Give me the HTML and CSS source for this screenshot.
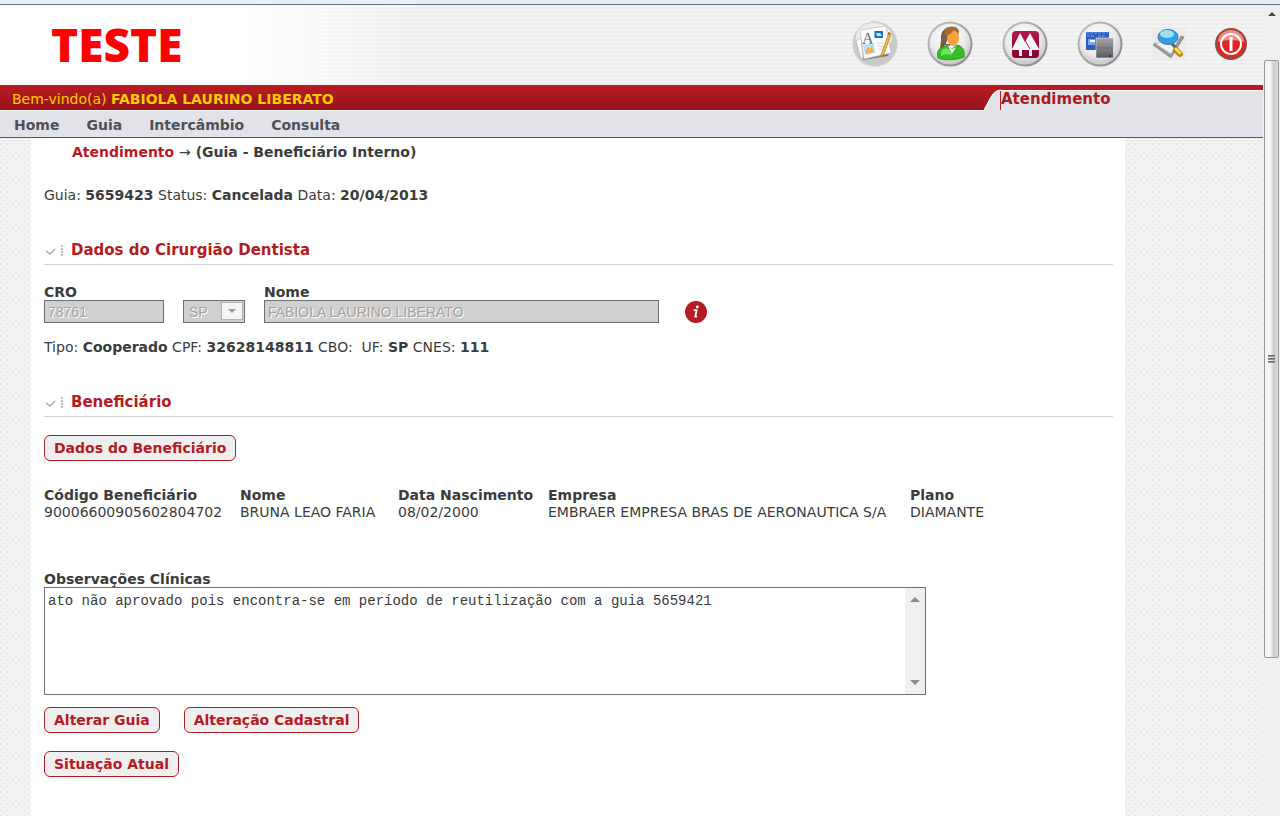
FILE: index.html
```html
<!DOCTYPE html>
<html lang="pt-BR">
<head>
<meta charset="utf-8">
<title>Atendimento - Guia</title>
<link rel="stylesheet" href="styles.css">
</head>
<body>
<div class="window-edge"></div>
<div class="viewport">
  <div class="page">
    <header class="header">
      <div class="logo">TESTE</div>
      <nav class="tools" aria-label="Ferramentas">
        <a href="#" aria-label="Documentos"><svg width="46" height="46" viewBox="0 0 46 46">
          <defs>
            <radialGradient id="disc" cx="45%" cy="35%" r="65%"><stop offset="0" stop-color="#fff"/><stop offset=".6" stop-color="#ececec"/><stop offset="1" stop-color="#c4c4c4"/></radialGradient>
            <linearGradient id="ring" x1="0" y1="0" x2="1" y2="1"><stop offset="0" stop-color="#c2c2c2"/><stop offset="1" stop-color="#858585"/></linearGradient>
            <linearGradient id="gray" x1="0" y1="0" x2="0" y2="1"><stop offset="0" stop-color="#a2a5aa"/><stop offset="1" stop-color="#575b62"/></linearGradient>
            <linearGradient id="rose" x1="0" y1="0" x2="0" y2="1"><stop offset="0" stop-color="#b5174f"/><stop offset="1" stop-color="#840033"/></linearGradient>
          </defs>
          <circle cx="23" cy="23" r="22.5" fill="#c9c9c9" stroke="#dedede"/>
          <ellipse cx="22" cy="16" rx="18" ry="14" fill="#ececec"/>
          <path d="M4 20l5-3 2 20-2 1z" fill="#fff" stroke="#a5a5a5" stroke-width=".6"/>
          <path d="M11 39l25-4 2-5-26 5z" fill="#777"/>
          <path d="M8 9l26-4 5 27-27 6z" fill="#fcfcfc" stroke="#bbb" stroke-width=".7"/>
          <text x="10" y="23" class="icon-letter" fill="#59646c">A</text>
          <rect x="22.500" y="10" width="8.500" height="7" fill="#1671ce"/><path d="M24 12h4l2 3h-5z" fill="#c8e6ff"/>
          <path d="M11 24l11-2 1 10-10 2z" fill="#b7dffa"/><path d="M13 31l3-5 2 2 2-3 2 6-8 2z" fill="#f2b14e"/>
          <path d="M25 22h7M25 25h7M26 28h5" stroke="#d4d4d4"/>
          <path d="M37 12l-7 19-2 5 4-3 7-20z" fill="#f4bd38" stroke="#ae7b18" stroke-width=".7"/><path d="M36 11l3 1-1 2-2-1z" fill="#c55f4b"/>
        </svg></a>
        <a href="#" aria-label="Atendente"><svg width="46" height="46" viewBox="0 0 46 46">
          <circle cx="23" cy="23" r="21.500" fill="url(#disc)" stroke="url(#ring)" stroke-width="2"/>
          <path d="M14 19C13 9 20 5 26 6c5 0 7 4 5 8L21 18l-4 8-4 2z" fill="#8b5427"/>
          <path d="M11 37c-2-7 2-12 9-12l5 3 5-4c6 1 8 6 7 12-7 3-19 4-26 1z" fill="#35bf27" stroke="#169117" stroke-width=".8"/>
          <path d="M14 31c3-5 7-4 9-1l2 4c-4-1-8-1-11 1z" fill="#75e45b"/>
          <path d="M21 25l4 8 4-7-4 2z" fill="#eefaff"/>
          <ellipse cx="26" cy="17" rx="6" ry="8" fill="#f7a33d"/>
          <path d="M18 15c4-1 7-3 9-6l5 3c0-6-5-7-9-6-5 1-7 5-5 9z" fill="#a86a30"/>
          <path d="M17 12v8c0 4 3 4 6 4" fill="none" stroke="#64615f" stroke-width="1.500"/><rect x="15" y="14" width="4" height="7" rx="2" fill="#676465"/>
        </svg></a>
        <a href="#" aria-label="Cooperativa"><svg width="46" height="46" viewBox="0 0 46 46">
          <circle cx="23" cy="23" r="21.500" fill="url(#disc)" stroke="url(#ring)" stroke-width="2"/>
          <rect x="10" y="10" width="27" height="27" rx="4" fill="url(#rose)"/>
          <path d="M10 28L18 12l5 9 5-9 9 16v1h-7v6h-3v-6h-7v6h-3v-6h-7z" fill="#f6f6f6"/>
          <path d="M21 16l7 12" stroke="#b5174f"/>
        </svg></a>
        <a href="#" aria-label="Sistema"><svg width="46" height="46" viewBox="0 0 46 46">
          <circle cx="23" cy="23" r="21.500" fill="url(#disc)" stroke="url(#ring)" stroke-width="2"/>
          <rect x="9" y="11" width="23" height="18" fill="#2c5bbe"/>
          <path d="M9 12h22M10 15h8M21 15h8" stroke="#7da7ee" stroke-dasharray="3 1"/>
          <rect x="11" y="18" width="7" height="6" fill="#79a6ed"/><path d="M13 19h5v2h-5z" fill="#fff"/>
          <rect x="19" y="17" width="17.500" height="20" fill="url(#gray)" stroke="#e9e9e9" stroke-width=".6"/>
          <path d="M20 27h15" stroke="#696d73"/><path d="M32 34h2v2h-2z" fill="#343a4c"/>
        </svg></a>
        <a href="#" aria-label="Pesquisar"><svg width="34" height="34" viewBox="0 0 34 34">
          <rect width="34" height="34" fill="#ebebeb"/>
          <path d="M1 18l18 13 13-21-3-1-10 17L3 16z" fill="#999" stroke="#777" stroke-width=".6"/>
          <path d="M4 17l7-4 13 5-5 9z" fill="#f5f5f5" stroke="#bbb"/>
          <ellipse cx="16" cy="10" rx="10" ry="7.500" fill="#2da1e2" stroke="#3f72a0"/>
          <ellipse cx="15" cy="7" rx="7" ry="4" fill="#a6ddf6"/>
          <path d="M20 17l4 4" stroke="#58616b" stroke-width="3"/>
          <path d="M24 23l4 4" stroke="#b58a13" stroke-width="6" stroke-linecap="round"/><path d="M24 22l4 4" stroke="#f7df57" stroke-width="3" stroke-linecap="round"/>
        </svg></a>
        <a href="#" aria-label="Sair"><svg width="32" height="32" viewBox="0 0 32 32">
          <circle cx="16" cy="16" r="15" fill="#e32322" stroke="#8e4c46" stroke-width="2"/>
          <path d="M3 14a13 12 0 0126 0q-13-4-26 0" fill="#f28a80"/>
          <circle cx="16" cy="16" r="10" fill="none" stroke="#fff" stroke-width="2"/>
          <path d="M16 9v14" stroke="#fff" stroke-width="3"/>
        </svg></a>
      </nav>
    </header>
    <div class="bar">
      <p class="welcome">Bem-vindo(a) <strong>FABIOLA LAURINO LIBERATO</strong></p>
      <svg class="bar-curve" width="17" height="26" viewBox="0 0 17 26" aria-hidden="true">
        <path d="M0 25L7 12Q11 5 17 5V26H0z" fill="#e1e3e9"/>
        <path d="M0 25L7 12Q11 5 17 5" fill="none" stroke="#fff"/>
        <path d="M16.500 6v19" stroke="#b51b22"/>
      </svg>
      <div class="tab">Atendimento</div>
    </div>
    <nav class="menu" aria-label="Principal">
      <a href="#">Home</a><a href="#">Guia</a><a href="#">Intercâmbio</a><a href="#">Consulta</a>
    </nav>
    <main class="panel">
      <p class="crumbs"><a href="#">Atendimento</a> <span class="arrow">→</span> (Guia - Beneficiário Interno)</p>
      <p class="guide">Guia: <strong>5659423</strong> Status: <strong>Cancelada</strong> Data: <strong>20/04/2013</strong></p>

      <h2 class="section"><svg width="20" height="14" viewBox="0 0 20 14" aria-hidden="true"><path d="M2 8l4 3 5-5" fill="none" stroke="#a7a9ac" stroke-width="1.500"/><path d="M18 2v12" stroke="#bbb" stroke-width="2" stroke-dasharray="2 1"/></svg>Dados do Cirurgião Dentista</h2>
      <div class="dentist">
        <div class="field cro"><label for="cro">CRO</label><input id="cro" value="78761" disabled></div>
        <div class="field state">
          <select aria-label="UF" disabled><option>SP</option></select>
          <svg class="drop" width="22" height="18" viewBox="0 0 22 18" aria-hidden="true"><rect x=".5" y=".5" width="21" height="17" fill="#f4f4f4" stroke="#b2b2b2"/><path d="M7 7h8l-4 4z" fill="#9b9b9b"/></svg>
        </div>
        <div class="field name"><label for="nome">Nome</label><input id="nome" value="FABIOLA LAURINO LIBERATO" disabled></div>
        <button class="info" aria-label="Informações"><svg width="22" height="22" viewBox="0 0 24 24"><circle cx="12" cy="12" r="12" fill="#b51b22"/><circle cx="13.500" cy="6.500" r="1.600" fill="#fff"/><path d="M9.500 10h3.200l-1.500 7h2" fill="none" stroke="#fff" stroke-width="2"/></svg></button>
      </div>
      <p class="details">Tipo: <strong>Cooperado</strong> CPF: <strong>32628148811</strong> CBO: &nbsp;UF: <strong>SP</strong> CNES: <strong>111</strong></p>

      <h2 class="section"><svg width="20" height="14" viewBox="0 0 20 14" aria-hidden="true"><path d="M2 8l4 3 5-5" fill="none" stroke="#a7a9ac" stroke-width="1.500"/><path d="M18 2v12" stroke="#bbb" stroke-width="2" stroke-dasharray="2 1"/></svg>Beneficiário</h2>
      <button class="btn beneficiary">Dados do Beneficiário</button>
      <table class="data">
        <colgroup><col class="c-code"><col class="c-name"><col class="c-date"><col class="c-company"><col></colgroup>
        <thead><tr><th>Código Beneficiário</th><th>Nome</th><th>Data Nascimento</th><th>Empresa</th><th>Plano</th></tr></thead>
        <tbody><tr><td>90006600905602804702</td><td>BRUNA LEAO FARIA</td><td>08/02/2000</td><td>EMBRAER EMPRESA BRAS DE AERONAUTICA S/A</td><td>DIAMANTE</td></tr></tbody>
      </table>

      <label class="notes-label" for="obs">Observações Clínicas</label>
      <div class="notes">
        <textarea id="obs">ato não aprovado pois encontra-se em período de reutilização com a guia 5659421</textarea>
        <div class="notes-scroll" aria-hidden="true">
          <svg width="10" height="6" viewBox="0 0 10 6"><path d="M0 6l5-5 5 5z" fill="#8c8c8c"/></svg>
          <svg width="10" height="6" viewBox="0 0 10 6"><path d="M0 0l5 5 5-5z" fill="#8c8c8c"/></svg>
        </div>
      </div>
      <div class="actions"><button class="btn">Alterar Guia</button><button class="btn">Alteração Cadastral</button></div>
      <button class="btn">Situação Atual</button>
    </main>
  </div>
  <div class="scrollbar" aria-hidden="true">
    <svg class="scroll-up" width="8" height="4" viewBox="0 0 8 4"><path d="M0 4l4-4 4 4z" fill="#444"/></svg>
    <div class="thumb"><i></i><i></i><i></i></div>
  </div>
</div>
</body>
</html>
```

FILE: styles.css
```css
* { box-sizing: border-box; }
body {
  margin: 0;
  min-height: 100vh;
  display: flex;
  flex-direction: column;
  color: #3b3b3b;
  font: 14px/18px Verdana, "DejaVu Sans", sans-serif;
}
p, h2 { margin: 0; }
a { color: inherit; text-decoration: none; }
svg { display: block; flex: none; }
button, input, select, textarea { margin: 0; color: inherit; }

.window-edge { height: 5px; background: #e6effa; border-bottom: 1px solid #707070; }
.viewport { flex: 1; display: flex; }
.page {
  flex: 1;
  min-width: 0;
  display: flex;
  flex-direction: column;
  background-color: #f3f3f3;
  background-image:
    radial-gradient(circle at 1px 1px, #e9e9e9 1px, transparent 1px),
    radial-gradient(circle at 4px 4px, #ececec 1px, transparent 1px);
  background-size: 6px 6px;
}

.header {
  height: 80px;
  display: flex;
  align-items: center;
  justify-content: space-between;
  padding: 0 16px 2px 51px;
  background:
    linear-gradient(to right, #fff 250px, transparent 420px),
    repeating-linear-gradient(#f3f3f3 0 2px, #ededed 2px 4px);
}
.logo { color: #f00; font: 800 46px/60px "Open Sans", sans-serif; }
.tools { display: flex; align-items: center; gap: 29px; }
.icon-letter { font: 16px "Liberation Serif", serif; }

.bar { display: flex; height: 26px; background: linear-gradient(#b81c22, #95141a); }
.welcome { flex: 1; padding: 5px 12px 0; color: #fc0; border-bottom: 1px solid #fff; }
.tab {
  width: 262px;
  border-top: 5px solid #b81c22;
  box-shadow: inset 0 1px #fff;
  background: #e1e3e9;
  color: #ab1a20;
  font-size: 15px;
  font-weight: bold;
}
.menu {
  display: flex;
  gap: 27px;
  height: 27px;
  padding: 5px 14px 0;
  background: #e1e3e9;
  border-bottom: 1px solid #b5323a;
  font-weight: bold;
}
.menu a { color: #505057; }

.panel { flex: 1; margin: 0 138px 0 31px; padding: 5px 12px 38px 13px; background: #fff; }
.crumbs { padding-left: 28px; font-weight: bold; }
.crumbs a { color: #b51b22; }
.crumbs .arrow { font-weight: normal; }
.guide { margin-top: 25px; }
.section {
  display: flex;
  align-items: center;
  gap: 7px;
  margin-top: 36px;
  padding-bottom: 4px;
  border-bottom: 1px solid #d4d4d4;
  color: #b51b22;
  font-size: 15px;
  line-height: 20px;
}
.dentist { display: flex; align-items: flex-end; margin-top: 19px; }
.field { position: relative; display: flex; flex-direction: column; }
.field label, .notes-label { display: block; font-weight: bold; line-height: 16px; }
.field input, .field select {
  width: 100%;
  height: 23px;
  padding: 0 3px;
  border: 1px solid #6f6f6f;
  border-radius: 0;
  background: #d0d0d0;
  color: #a3a3a3;
  font: 14px "Liberation Sans", Arial, sans-serif;
  text-shadow: 1px 1px #fff;
  opacity: 1;
}
.field select { appearance: none; padding-left: 5px; }
.cro { width: 120px; }
.state { width: 62px; margin: 0 19px; }
.name { width: 395px; }
.drop { position: absolute; right: 2px; bottom: 3px; pointer-events: none; }
.info { margin-left: 26px; padding: 0; border: 0; background: none; }
.details { margin-top: 15px; }

.btn {
  display: block;
  padding: 3px 9px;
  border: 1px solid #b51b22;
  border-radius: 6px;
  background: #efefef;
  color: #b51b22;
  font: bold 14px/18px Verdana, "DejaVu Sans", sans-serif;
}
.beneficiary { margin-top: 18px; }
.data { width: 100%; margin-top: 26px; border-collapse: collapse; table-layout: fixed; line-height: 17px; }
.data th, .data td { padding: 0; text-align: left; white-space: nowrap; }
.c-code { width: 196px; }
.c-name { width: 158px; }
.c-date { width: 150px; }
.c-company { width: 362px; }

.notes-label { margin-top: 50px; }
.notes { display: flex; max-width: 882px; height: 108px; border: 1px solid #6f6f6f; }
.notes textarea {
  flex: 1;
  padding: 5px 3px;
  border: 0;
  resize: none;
  background: #fff;
  font: 14px/16px "Liberation Mono", "Courier New", monospace;
}
.notes-scroll {
  width: 20px;
  display: flex;
  flex-direction: column;
  align-items: center;
  justify-content: space-between;
  padding: 8px 0;
  background: #f0f0f0;
}
.actions { display: flex; gap: 24px; margin: 12px 0 18px; }

.scrollbar {
  width: 17px;
  display: flex;
  flex-direction: column;
  align-items: center;
  padding: 7px 1px 0;
  background: #f0f0f0;
}
.thumb {
  width: 15px;
  height: 79%;
  max-height: 598px;
  margin-top: 44px;
  display: flex;
  flex-direction: column;
  align-items: center;
  justify-content: center;
  gap: 1px;
  border: 1px solid #979797;
  border-radius: 2px;
  background: linear-gradient(to right, #f5f5f5 40%, #c9cace 70%, #dcdcdf);
}
.thumb i { width: 7px; height: 2px; background: linear-gradient(#555, #aaa); }
```
